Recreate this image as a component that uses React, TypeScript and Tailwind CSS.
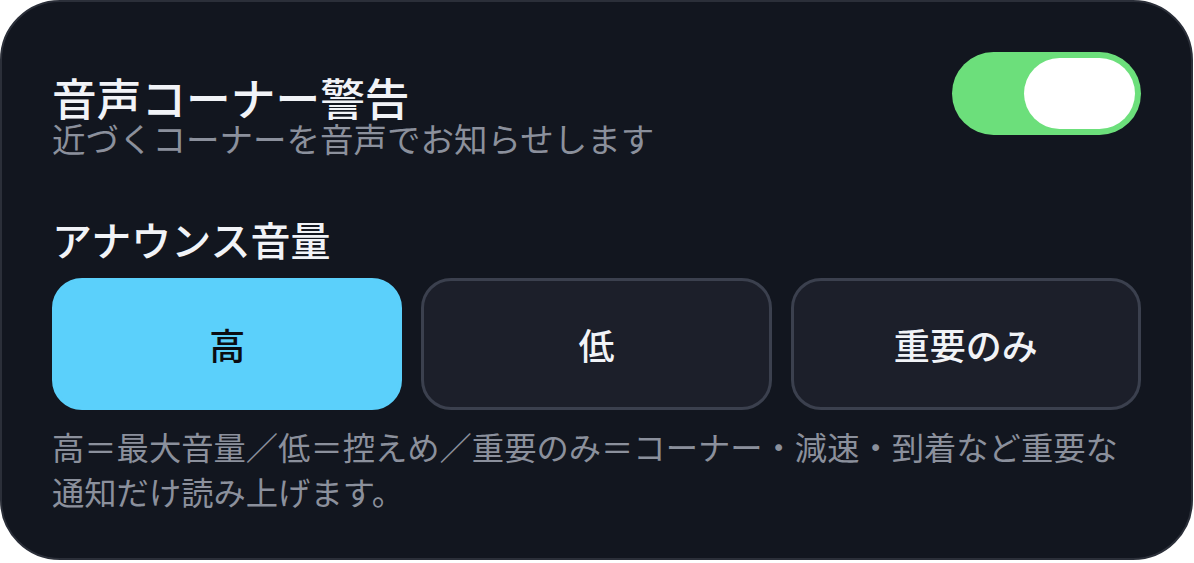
import { useState } from "react";

const options = ["高", "低", "重要のみ"];

export default function App() {
  const [enabled, setEnabled] = useState(true);
  const [volume, setVolume] = useState("高");

  return (
    <div
      className="w-[1193px] bg-white"
      style={{ fontFamily: '"Noto Sans CJK JP", "Noto Sans", sans-serif' }}
    >
      <div className="w-[1193px] rounded-[60px] border-2 border-[#2b2f39] bg-[#12161f] px-[50px] pt-[50px] pb-[44px]">
        {/* header row */}
        <div className="flex items-start justify-between">
          <div className="mt-[22px]">
            <h1 className="text-[44.7px] leading-[46px] font-medium text-[#f1f3f7]">音声コーナー警告</h1>
            <p className="text-[33.5px] leading-[36px] text-[#8b909c]">近づくコーナーを音声でお知らせします</p>
          </div>
          <button
            onClick={() => setEnabled(!enabled)}
            className={
              "flex h-[83px] w-[189px] items-center rounded-full px-[6px] " +
              (enabled ? "justify-end bg-[#6cdf7b]" : "justify-start bg-[#3b4150]")
            }
          >
            <span className="block h-[71px] w-[111px] rounded-full bg-white" />
          </button>
        </div>

        <h2 className="mt-[63px] text-[40px] leading-[40px] font-medium text-[#f1f3f7]">アナウンス音量</h2>

        <div className="mt-[19px] grid grid-cols-3 gap-[19px]">
          {options.map((opt) => (
            <button
              key={opt}
              onClick={() => setVolume(opt)}
              className={
                volume === opt
                  ? "flex h-[132px] items-center justify-center rounded-[30px] border-[3px] border-[#5bd0fb] bg-[#5bd0fb] text-[36px] font-medium text-[#0b0d12]"
                  : "flex h-[132px] items-center justify-center rounded-[30px] border-[3px] border-[#3b404e] bg-[#1c1f2a] text-[36px] font-medium text-[#f1f3f7]"
              }
            >
              {opt}
            </button>
          ))}
        </div>

        <p className="mt-[14px] text-[32.3px] leading-[45px] text-[#8b909c]">
          高＝最大音量／低＝控えめ／重要のみ＝コーナー・減速・到着など重要な通知だけ読み上げます。
        </p>
      </div>
    </div>
  );
}
